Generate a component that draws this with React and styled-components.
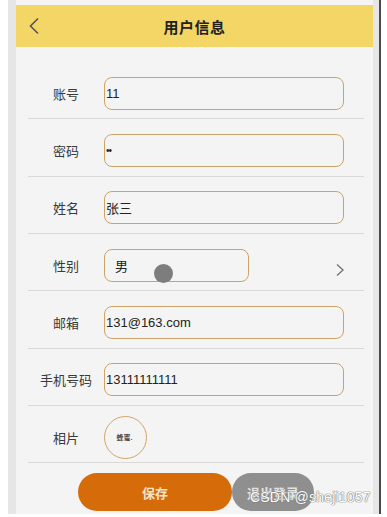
import React from 'react';
import styled, { createGlobalStyle } from 'styled-components';

const GlobalStyle = createGlobalStyle`
  html, body {
    margin: 0;
    padding: 0;
    background: #ffffff;
  }
  body {
    font-family: "Liberation Sans", "Noto Sans CJK SC", sans-serif;
    overflow: hidden;
  }
`;

const fields = [
  { label: '账号', value: '11' },
  { label: '密码', value: '••', small: true },
  { label: '姓名', value: '张三' },
  { label: '性别', value: '男', short: true },
  { label: '邮箱', value: '131@163.com' },
  { label: '手机号码', value: '13111111111' },
];

const App = () => {
  return (
    <>
      <GlobalStyle />
      <Page>
        <Shell>
          <Phone>
            <Header>
              <BackIcon width="12" height="18" viewBox="0 0 12 18">
                <path d="M10 1.5 L2.5 9 L10 16.5" fill="none" stroke="#555" strokeWidth="1.6" />
              </BackIcon>
              <Title>用户信息</Title>
            </Header>
            <List>
              {fields.map(f => (
                <Row key={f.label}>
                  <Label>{f.label}</Label>
                  <Field short={f.short}>
                    <FieldText small={f.small}>{f.value}</FieldText>
                  </Field>
                  {f.short ? (
                    <Arrow width="10" height="14" viewBox="0 0 10 14">
                      <path d="M2 1.5 L8 7 L2 12.5" fill="none" stroke="#777" strokeWidth="1.4" />
                    </Arrow>
                  ) : null}
                </Row>
              ))}
              <Row>
                <Label>相片</Label>
                <Avatar>
                  <AvatarText>蜂蜜.</AvatarText>
                </Avatar>
              </Row>
              <Buttons>
                <SaveButton>保存</SaveButton>
                <LogoutButton>退出登录</LogoutButton>
              </Buttons>
            </List>
            <Cursor />
          </Phone>
        </Shell>
        <Watermark>CSDN @sheji1057</Watermark>
      </Page>
    </>
  );
};

const Page = styled.div`
  position: relative;
  width: 387px;
  height: 517px;
  padding-left: 8px;
  box-sizing: border-box;
  overflow: hidden;
`;

const Shell = styled.div`
  width: 373px;
  height: 514px;
  box-sizing: border-box;
  background: #e6e6e6;
  padding: 0 6px 0 8px;
  border-right: 2px solid #4a4a4a;
`;

const Phone = styled.div`
  position: relative;
  height: 100%;
  padding-top: 5px;
  box-sizing: border-box;
  background: #f4f4f4;
`;

const Header = styled.div`
  position: relative;
  height: 42px;
  background: #f3d666;
  display: flex;
  align-items: center;
  justify-content: center;
`;

const BackIcon = styled.svg`
  position: absolute;
  left: 12px;
  top: 12px;
`;

const Title = styled.div`
  font-size: 15px;
  font-weight: bold;
  color: #222;
  letter-spacing: 0.5px;
`;

const List = styled.div`
  padding: 15px 9px 0 12px;
`;

const Row = styled.div`
  display: flex;
  align-items: center;
  height: 57.33px;
  box-sizing: border-box;
  padding-top: 6px;
  border-bottom: 1px solid #d9d9d9;
`;

const Label = styled.div`
  width: 76px;
  flex-shrink: 0;
  text-align: center;
  font-size: 13px;
  color: #3a3a3a;
`;

const Field = styled.div`
  width: ${p => (p.short ? '145px' : '240px')};
  height: 33px;
  box-sizing: border-box;
  border: 1.5px solid #cda468;
  border-radius: 8px;
  display: flex;
  align-items: center;
  padding-left: ${p => (p.short ? '10px' : '1px')};
`;

const FieldText = styled.span`
  font-size: ${p => (p.small ? '10px' : '13px')};
  color: #222;
  letter-spacing: ${p => (p.small ? '-1px' : '0')};
`;

const Arrow = styled.svg`
  margin-left: auto;
  margin-right: 19px;
  margin-top: 10px;
`;

const Avatar = styled.div`
  width: 43px;
  height: 43px;
  box-sizing: border-box;
  border-radius: 50%;
  border: 1.5px solid #d2a56a;
  display: flex;
  align-items: center;
  justify-content: center;
`;

const AvatarText = styled.span`
  font-size: 7px;
  font-weight: bold;
  color: #444;
  margin-left: -2px;
`;

const Buttons = styled.div`
  display: flex;
  justify-content: center;
  padding-top: 10px;
`;

const PillButton = styled.div`
  height: 38px;
  border-radius: 19px;
  display: flex;
  align-items: center;
  justify-content: center;
  font-size: 13px;
  font-weight: bold;
`;

const SaveButton = styled(PillButton)`
  width: 154px;
  background: #d66b0a;
  color: #f3e3c8;
`;

const LogoutButton = styled(PillButton)`
  width: 82px;
  background: #8f8f8f;
  color: #e2e2e2;
`;

const Cursor = styled.div`
  position: absolute;
  left: 138px;
  top: 264px;
  width: 19px;
  height: 19px;
  border-radius: 50%;
  background: #7d7d7d;
  filter: blur(0.6px);
`;

const Watermark = styled.div`
  position: absolute;
  left: 250px;
  top: 489px;
  font-size: 14px;
  color: #ffffff;
  letter-spacing: 0.2px;
  text-shadow: 0 0 1px #777, 0 0 1px #777, 0 0 1px #777;
`;

export default App;
